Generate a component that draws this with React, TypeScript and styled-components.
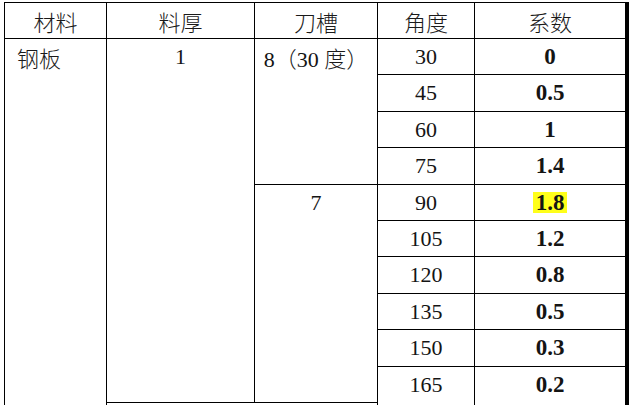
import React from "react";
import styled, { createGlobalStyle } from "styled-components";

const Global = createGlobalStyle`
  html, body {
    margin: 0;
    padding: 0;
    background: #ffffff;
    overflow: hidden;
  }
  body {
    width: 629px;
    height: 405px;
  }
`;

const Grid = styled.div`
  margin: 2px 0 0 4px;
  width: 625px;
  box-sizing: border-box;
  display: grid;
  grid-template-columns: 102px 148px 123px 97px 150px;
  grid-template-rows: 36px repeat(10, 36.4px) 12px;
  border-top: 1px solid #000;
  border-left: 1px solid #000;
  border-right: 4px solid #000;
  font-family: "Liberation Serif", "Noto Sans CJK SC", serif;
  color: #141414;
`;

const Cell = styled.div<{
  $span?: number;
  $noRight?: boolean;
  $noBottom?: boolean;
  $align?: "left" | "center";
  $bold?: boolean;
}>`
  box-sizing: border-box;
  grid-row: ${(p) => (p.$span ? `span ${p.$span}` : "auto")};
  border-right: ${(p) => (p.$noRight ? "none" : "1px solid #000")};
  border-bottom: ${(p) => (p.$noBottom ? "none" : "1px solid #000")};
  text-align: ${(p) => p.$align ?? "center"};
  padding-left: ${(p) => (p.$align === "left" ? "12px" : "0")};
  font-size: ${(p) => (p.$bold ? "23px" : "22px")};
  font-weight: ${(p) => (p.$bold ? 700 : 400)};
  line-height: 36px;
  white-space: nowrap;
`;

const Han = styled.span`
  font-family: "Noto Sans CJK SC", sans-serif;
  font-size: 22px;
  font-weight: 300;
  color: #1a1a1a;
`;

const Mark = styled.span`
  display: inline-block;
  background: #ffff1a;
  line-height: 21px;
  padding: 0 3px;
`;

const headers = ["材料", "料厚", "刀槽", "角度", "系数"];

const groupA = [
  ["30", "0"],
  ["45", "0.5"],
  ["60", "1"],
  ["75", "1.4"],
];
const groupB = [
  ["90", "1.8"],
  ["105", "1.2"],
  ["120", "0.8"],
  ["135", "0.5"],
  ["150", "0.3"],
];

export default function App() {
  return (
    <>
      <Global />
      <Grid>
        {headers.map((h, i) => (
          <Cell key={h} $noRight={i === 4}>
            <Han>{h}</Han>
          </Cell>
        ))}

        <Cell $span={11} $align="left" $noBottom>
          <Han>钢板</Han>
        </Cell>
        <Cell $span={10}>1</Cell>
        <Cell $span={4}>
          8<Han>（</Han>30 <Han>度）</Han>
        </Cell>
        {groupA.map(([a, k]) => (
          <React.Fragment key={a}>
            <Cell>{a}</Cell>
            <Cell $bold $noRight>
              {k}
            </Cell>
          </React.Fragment>
        ))}

        <Cell $span={6}>7</Cell>
        {groupB.map(([a, k]) => (
          <React.Fragment key={a}>
            <Cell>{a}</Cell>
            <Cell $bold $noRight>
              {a === "90" ? <Mark>{k}</Mark> : k}
            </Cell>
          </React.Fragment>
        ))}
        <Cell $span={2}>165</Cell>
        <Cell $span={2} $bold $noRight>
          0.2
        </Cell>

        <Cell $noRight $noBottom />
        <Cell $noBottom />
      </Grid>
    </>
  );
}
